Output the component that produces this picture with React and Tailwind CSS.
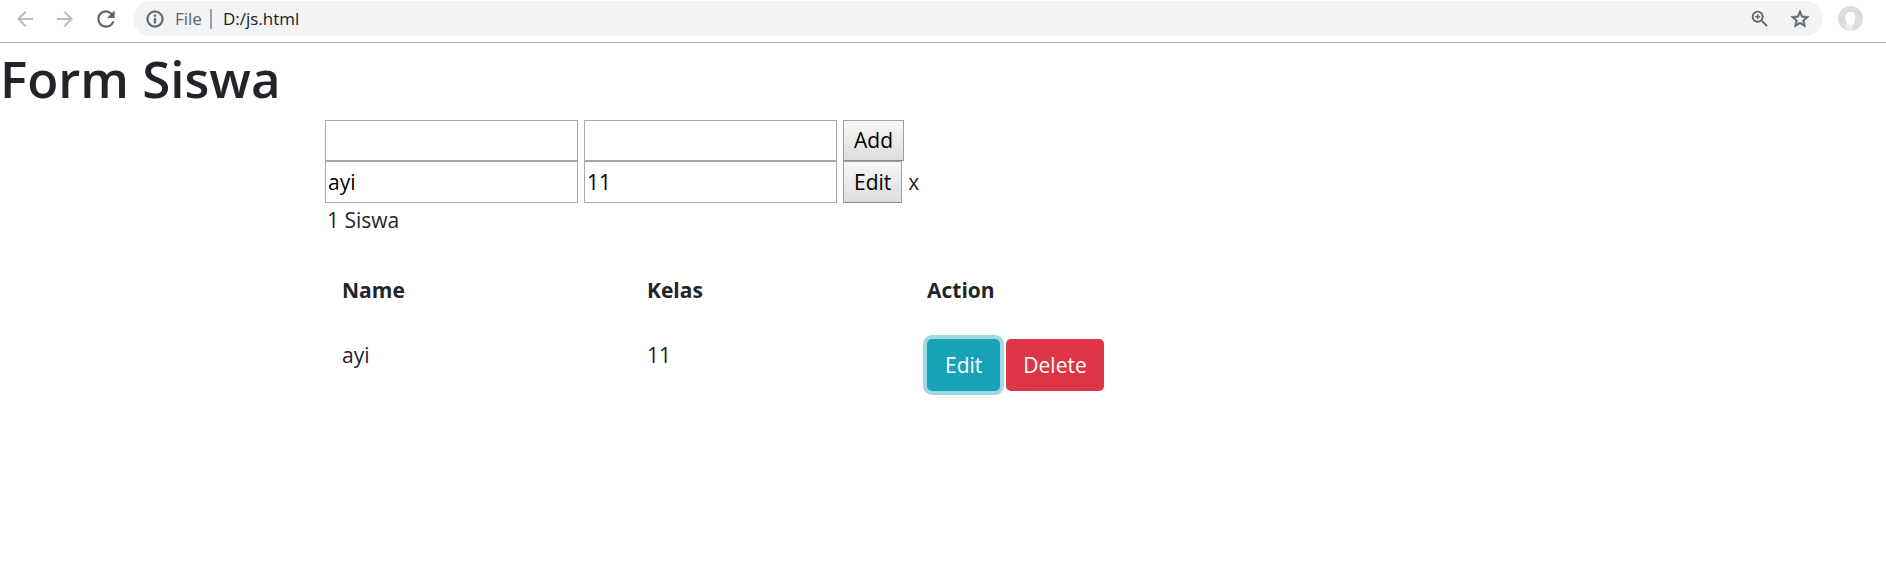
import { useState } from "react";
import {
  MdArrowBack,
  MdArrowForward,
  MdInfoOutline,
  MdRefresh,
  MdStarBorder,
  MdZoomIn,
} from "react-icons/md";

function Avatar() {
  return (
    <svg viewBox="0 0 25 25" className="size-[25px]" aria-hidden="true">
      <circle cx="12.5" cy="12.5" r="12.5" fill="#dcdcdc" />
      <path d="M12.3 6c-3.6 0-5.2 2.6-5 6 .1 2 .5 3.500 1.400 4.800l-.2 7.100a12.500 12.500 0 0 0 5 1l1-5.900c1.800-1.400 2.900-4.300 2.900-7.500 0-3.500-1.500-5.500-5.100-5.500z" fill="#fdfeff" />
      <path d="M8.700 17c1.300 1.400 2.800 1.900 5 1.700l-.7 6.200a12.500 12.500 0 0 1-4.500-.900z" fill="#e6eff5" />
    </svg>
  );
}

function BrowserBar() {
  const [url, setUrl] = useState("D:/js.html");
  return (
    <header className="flex h-[43px] items-start border-b border-[#b1b1b1] pt-px pr-[23px] pl-[13px] text-[#5f6368]">
      <nav className="flex h-[35px] items-center gap-4">
        <button type="button" aria-label="Back" className="text-[#babcbe]">
          <MdArrowBack className="size-6" />
        </button>
        <button type="button" aria-label="Forward" className="text-[#babcbe]">
          <MdArrowForward className="size-6" />
        </button>
        <button type="button" aria-label="Reload">
          <MdRefresh className="size-[26px]" />
        </button>
      </nav>
      <div className="ml-3.5 flex h-[35px] flex-1 items-center rounded-full bg-[#f1f3f4] px-3 text-[17px]">
        <MdInfoOutline className="size-5 [&>path:last-child]:[stroke-width:0.6px]" />
        <span className="ml-2.5">File</span>
        <span className="ml-2 h-5 w-0.5 bg-[#9aa0a6]" />
        <input
          aria-label="Address"
          value={url}
          onChange={(e) => setUrl(e.target.value)}
          className="ml-[11px] min-w-0 flex-1 bg-transparent text-[#202124] outline-none"
        />
        <button type="button" aria-label="Zoom">
          <MdZoomIn className="size-[22px] [&>path:last-child]:[stroke-width:0.6px]" />
        </button>
        <button type="button" aria-label="Bookmark" className="ml-[18px]">
          <MdStarBorder className="size-[22px] [&>path:last-child]:[stroke-width:0.6px]" />
        </button>
      </div>
      <button type="button" aria-label="Profile" className="ml-[15px] flex h-[35px] items-center">
        <Avatar />
      </button>
    </header>
  );
}

const fieldClass = "w-[253px] border border-[#a9a9a9] bg-white px-0.5 text-black outline-none";
const plainButtonClass =
  "border border-[#a0a0a0] border-b-[#8c8c8c] bg-linear-to-b from-[#f8f8f8] to-[#dddddd] px-2.5 text-black";

function StudentRow({ id, name, kelas, action, removable }) {
  const [values, setValues] = useState({ name, kelas });
  return (
    <form className="flex h-[42px] gap-1.5 first:h-[41px]" onSubmit={(e) => e.preventDefault()}>
      <input
        id={id + "-name"}
        aria-label="Name"
        className={fieldClass}
        value={values.name}
        onChange={(e) => setValues({ ...values, name: e.target.value })}
      />
      <input
        id={id + "-kelas"}
        aria-label="Kelas"
        className={fieldClass}
        value={values.kelas}
        onChange={(e) => setValues({ ...values, kelas: e.target.value })}
      />
      <button className={plainButtonClass}>{action}</button>
      {removable && (
        <button type="button" aria-label="x">
          x
        </button>
      )}
    </form>
  );
}

export default function App() {
  return (
    <div className="bg-white font-['Open_Sans','Noto_Sans',sans-serif] text-[21px] leading-[33px] text-[#212529]">
      <BrowserBar />
      <main>
        <h1 className="pt-0.5 pb-[9px] text-[51px] leading-[66px] font-semibold">Form Siswa</h1>
        <div className="pl-[325px]">
          <StudentRow id="new" name="" kelas="" action="Add" />
          <StudentRow id="edit" name="ayi" kelas="11" action="Edit" removable />
          <p className="pt-px pl-0.5">1 Siswa</p>
          <table className="mt-[21px] w-[799px] table-fixed text-left">
            <thead>
              <tr>
                <th className="w-[305px] px-[17px] py-4 font-bold">Name</th>
                <th className="w-[280px] px-[17px] py-4 font-bold">Kelas</th>
                <th className="px-[17px] py-4 font-bold">Action</th>
              </tr>
            </thead>
            <tbody>
              <tr className="align-top">
                <td className="px-[17px] py-4">ayi</td>
                <td className="px-[17px] py-4">11</td>
                <td className="px-[17px] py-4">
                  <div className="flex gap-1.5">
                    <button
                      type="button"
                      className="h-[52px] rounded-[5px] bg-[#17a2b8] px-[18px] text-white ring-4 ring-[#9fd8e2]"
                    >
                      Edit
                    </button>
                    <button type="button" className="h-[52px] rounded-[5px] bg-[#dc3545] px-[17px] text-white">
                      Delete
                    </button>
                  </div>
                </td>
              </tr>
            </tbody>
          </table>
        </div>
      </main>
    </div>
  );
}
